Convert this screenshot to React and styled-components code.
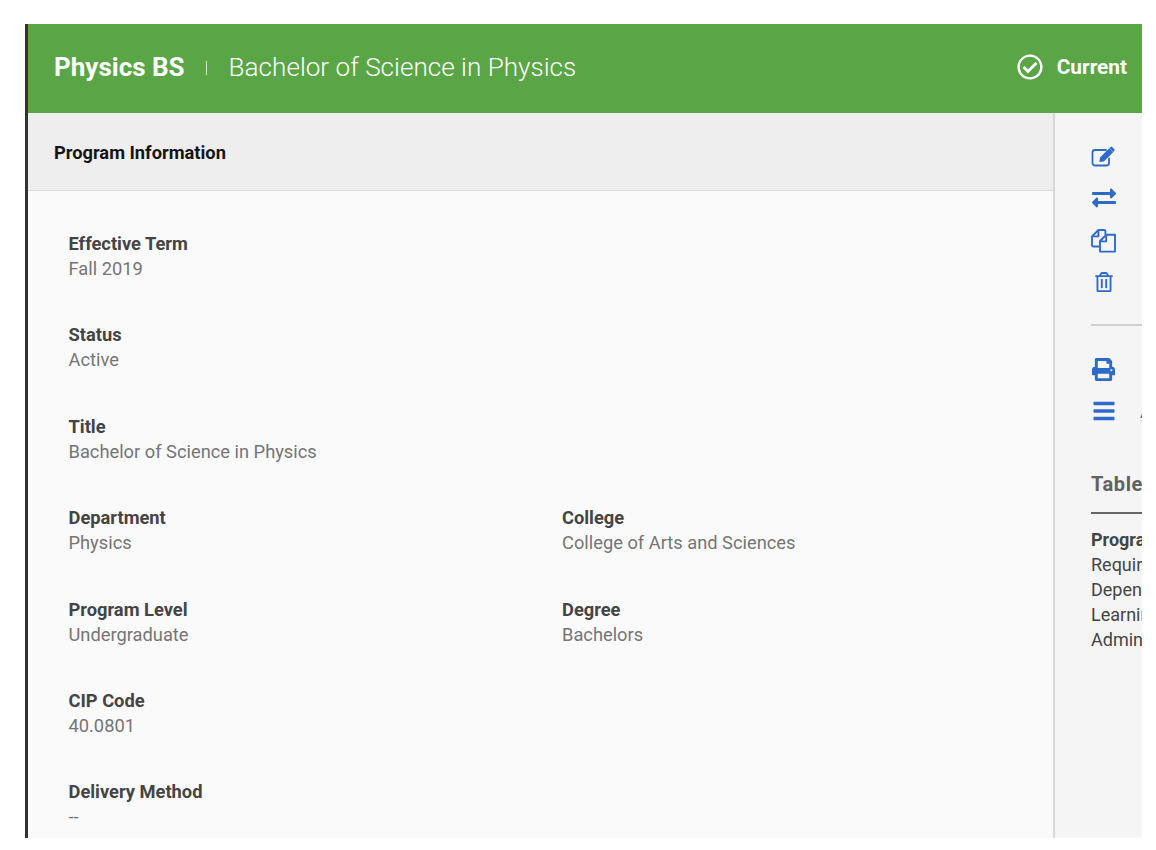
import React from "react";
import styled, { createGlobalStyle } from "styled-components";
import { FaRegCheckCircle, FaExchangeAlt, FaRegTrashAlt, FaPrint, FaBars } from "react-icons/fa";

const GlobalStyle = createGlobalStyle`
  html, body {
    margin: 0;
    padding: 0;
    background: #fff;
    font-family: Roboto, "Liberation Sans", sans-serif;
  }
`;

const Frame = styled.div`
  width: 1114px;
  height: 814px;
  margin: 24px 0 0 25px;
  border-left: 3px solid #333;
  overflow: hidden;
  display: flex;
  flex-direction: column;
  background: #fafafa;
`;

const Header = styled.header`
  flex: 0 0 89px;
  background: #5aa546;
  color: #fff;
  display: flex;
  align-items: center;
  padding: 0 15px 4px 26px;
  box-sizing: border-box;
`;

const ProgramCode = styled.span`
  font-size: 26px;
  font-weight: 700;
`;

const Divider = styled.span`
  width: 1px;
  height: 14px;
  background: rgba(255, 255, 255, 0.75);
  margin: 2px 22px 0 21px;
`;

const ProgramTitle = styled.span`
  font-size: 26.1px;
  font-weight: 300;
  flex: 1;
`;

const StatusBadge = styled.div`
  display: flex;
  align-items: center;
  gap: 14px;
  font-size: 20.8px;
  font-weight: 700;
`;

const Body = styled.div`
  flex: 1;
  display: flex;
  min-height: 0;
`;

const Main = styled.main`
  width: 1025px;
  flex: none;
`;

const SectionBar = styled.div`
  height: 78px;
  box-sizing: border-box;
  background: #eeeeee;
  border-bottom: 1px solid #dcdcdc;
  display: flex;
  align-items: center;
  padding: 2px 26px 0;
  font-size: 18.3px;
  font-weight: 700;
  color: #141414;
`;

const FieldGrid = styled.div`
  display: grid;
  grid-template-columns: 493.5px 1fr;
  row-gap: 41.4px;
  padding: 40px 0 0 40.5px;
`;

const Field = styled.div`
  grid-column: ${(props) => (props.$wide ? "1 / -1" : "auto")};
  height: 50px;
`;

const Label = styled.div`
  font-size: 18.3px;
  line-height: 25px;
  font-weight: 700;
  color: #444;
`;

const Value = styled.div`
  font-size: 18.3px;
  line-height: 25px;
  color: #757575;
`;

const Sidebar = styled.aside`
  flex: 1;
  min-width: 0;
  background: #f5f5f5;
  border-left: 2px solid #d8d8d8;
  padding: 22px 0 0 36px;
  color: #444;
`;

const IconColumn = styled.div`
  display: flex;
  flex-direction: column;
  align-items: flex-start;
  color: #2e6bc9;
`;

const IconRow = styled.div`
  position: relative;
  height: 42px;
  width: 25px;
  display: flex;
  align-items: center;
  justify-content: center;
  font-size: ${(props) => props.$size || 24}px;
`;

const ActionLabel = styled.span`
  position: absolute;
  left: 49px;
  top: 9px;
  font-size: 18px;
  line-height: 25px;
`;

const Rule = styled.hr`
  border: none;
  height: 2px;
  background: #d0d0d0;
  margin: 21px 0 22px;
  width: 200px;
`;

const TocHeading = styled.div`
  width: 200px;
  white-space: nowrap;
  margin-top: 40px;
  padding-bottom: 16px;
  border-bottom: 2px solid #666;
  font-size: 20px;
  line-height: 24px;
  font-weight: 700;
  letter-spacing: 0.6px;
  color: #616161;
`;

const TocList = styled.ul`
  list-style: none;
  margin: 13px 0 0;
  padding: 0;
  white-space: nowrap;
`;

const TocItem = styled.li`
  font-size: 18px;
  line-height: 25px;
  font-weight: ${(props) => (props.$active ? 700 : 400)};
  color: #444;
`;

const EditIcon = () => (
  <svg width="25" height="21" viewBox="0 0 25 21">
    <path d="M18 12.5V17c0 1.4-1.1 2.5-2.5 2.5H4c-1.4 0-2.5-1.1-2.5-2.5V6.5C1.500 5.100 2.600 4 4 4h11" fill="none" stroke="currentColor" strokeWidth="1.8" strokeLinecap="round" />
    <path d="M9 11.500 18.200 2.300l3.900 3.900-9.200 9.200-4.500.6zM19.300 1.200c.6-.6 1.500-.6 2.100 0l1.800 1.800c.6.6.6 1.500 0 2.100l-.9.9-3.900-3.900z" fill="currentColor" />
  </svg>
);

const CopyIcon = () => (
  <svg width="25" height="25" viewBox="0 0 25 25" fill="none" stroke="currentColor" strokeWidth="1.9" strokeLinejoin="round">
    <path d="M8.5 18.500H2.200c-.7 0-1.200-.5-1.200-1.200V8.400L7.400 2h5.800c.7 0 1.200.5 1.200 1.200v3.600" />
    <path d="M7.400 2.400v6H1.400" />
    <path d="M9 23.600V13l6.200-6.200H24v16.800z" />
    <path d="M15.200 7.200v6.200H9" />
  </svg>
);

const topFields = [
  { label: "Effective Term", value: "Fall 2019", wide: true },
  { label: "Status", value: "Active", wide: true },
  { label: "Title", value: "Bachelor of Science in Physics", wide: true },
  { label: "Department", value: "Physics" },
  { label: "College", value: "College of Arts and Sciences" },
  { label: "Program Level", value: "Undergraduate" },
  { label: "Degree", value: "Bachelors" },
  { label: "CIP Code", value: "40.0801", wide: true },
  { label: "Delivery Method", value: "--", wide: true },
];

const tocLinks = ["Requirements", "Dependencies", "Learning Outcomes", "Administration"];

export default function App() {
  return (
    <>
      <GlobalStyle />
      <Frame>
        <Header>
          <ProgramCode>Physics BS</ProgramCode>
          <Divider />
          <ProgramTitle>Bachelor of Science in Physics</ProgramTitle>
          <StatusBadge>
            <FaRegCheckCircle size={26} />
            Current
          </StatusBadge>
        </Header>
        <Body>
          <Main>
            <SectionBar>Program Information</SectionBar>
            <FieldGrid>
              {topFields.map((field) => (
                <Field key={field.label} $wide={field.wide}>
                  <Label>{field.label}</Label>
                  <Value>{field.value}</Value>
                </Field>
              ))}
            </FieldGrid>
          </Main>
          <Sidebar>
            <IconColumn>
              <IconRow><EditIcon /></IconRow>
              <IconRow><FaExchangeAlt /></IconRow>
              <IconRow><CopyIcon /></IconRow>
              <IconRow $size={20}><FaRegTrashAlt /></IconRow>
            </IconColumn>
            <Rule />
            <IconColumn>
              <IconRow $size={23}><FaPrint /></IconRow>
              <IconRow>
                <FaBars />
                <ActionLabel>A</ActionLabel>
              </IconRow>
            </IconColumn>
            <TocHeading>Table of Contents</TocHeading>
            <TocList>
              <TocItem $active>Program Information</TocItem>
              {tocLinks.map((link) => (
                <TocItem key={link}>{link}</TocItem>
              ))}
            </TocList>
          </Sidebar>
        </Body>
      </Frame>
    </>
  );
}
